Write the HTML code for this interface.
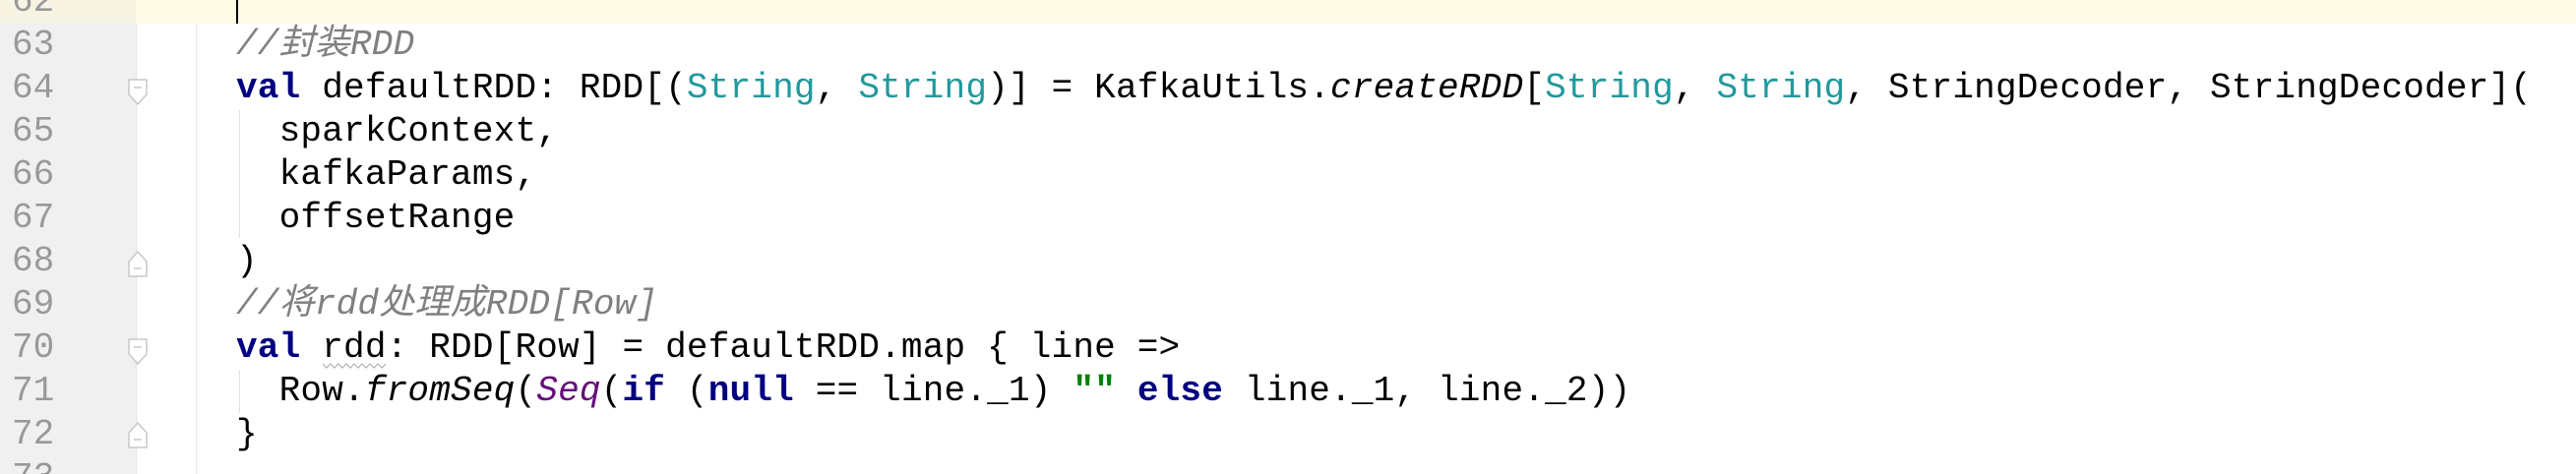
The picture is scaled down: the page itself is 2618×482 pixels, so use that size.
<!DOCTYPE html>
<html><head><meta charset="utf-8"><style>
html,body{margin:0;padding:0;width:2618px;height:482px;overflow:hidden;background:#fff;}
body{position:relative;font-family:"Liberation Mono","Noto Sans CJK SC",monospace;font-size:36px;letter-spacing:0.2px;}
.gut{position:absolute;left:0;top:0;width:138px;height:482px;background:#f0f0f0;}
.fold{position:absolute;left:138px;top:0;width:62px;height:482px;background:#fff;border-left:1px solid #e4e4e4;border-right:1px solid #e8e8e8;box-sizing:border-box;}
.hl{position:absolute;left:0;top:0;width:2618px;height:24px;background:#fefae6;}
.hlg{position:absolute;left:0;top:0;width:138px;height:24px;background:#f7f4e4;}
.ln{position:absolute;left:12px;color:#999;height:44px;line-height:44px;white-space:pre;letter-spacing:0;}
.c{position:absolute;left:240px;height:44px;line-height:44px;white-space:pre;color:#000;}
.k{color:#000080;font-weight:bold}
.t{color:#20999d}
.cm{color:#808080;font-style:italic}
.i{font-style:italic}
.p{color:#660e7a;font-style:italic}
.g{color:#008000;font-weight:bold}
.guide{position:absolute;left:243px;width:1px;background:#e0e0e0;}
.fm{position:absolute;left:130px;}
</style></head><body>
<div class="gut"></div>
<div class="fold"></div>
<div class="hl"></div>
<div class="hlg"></div>
<div style="position:absolute;left:240px;top:0;width:2px;height:24px;background:#000"></div>

<div class="ln" style="top:-20px">62</div>
<div class="ln" style="top:24px">63</div>
<div class="ln" style="top:68px">64</div>
<div class="ln" style="top:112px">65</div>
<div class="ln" style="top:156px">66</div>
<div class="ln" style="top:200px">67</div>
<div class="ln" style="top:244px">68</div>
<div class="ln" style="top:288px">69</div>
<div class="ln" style="top:332px">70</div>
<div class="ln" style="top:376px">71</div>
<div class="ln" style="top:420px">72</div>
<div class="ln" style="top:464px;height:18px;overflow:hidden">73</div>

<svg class="fm" style="top:80px" width="20" height="28"><path d="M1 1H19V16L10 26L1 16Z" fill="#fff" stroke="#c8c8c8" stroke-width="1.5"/><path d="M6 9H14" stroke="#c8c8c8" stroke-width="1.5"/></svg>
<svg class="fm" style="top:254px" width="20" height="28"><path d="M1 27H19V12L10 2L1 12Z" fill="#fff" stroke="#c8c8c8" stroke-width="1.5"/><path d="M6 19H14" stroke="#c8c8c8" stroke-width="1.5"/></svg>
<svg class="fm" style="top:344px" width="20" height="28"><path d="M1 1H19V16L10 26L1 16Z" fill="#fff" stroke="#c8c8c8" stroke-width="1.5"/><path d="M6 9H14" stroke="#c8c8c8" stroke-width="1.5"/></svg>
<svg class="fm" style="top:428px" width="20" height="28"><path d="M1 27H19V12L10 2L1 12Z" fill="#fff" stroke="#c8c8c8" stroke-width="1.5"/><path d="M6 19H14" stroke="#c8c8c8" stroke-width="1.5"/></svg>

<div class="guide" style="top:112px;height:130px"></div>
<div class="guide" style="top:376px;height:44px"></div>

<div class="c cm" style="top:24px">//封装RDD</div>
<div class="c" style="top:68px"><span class="k">val</span> defaultRDD: RDD[(<span class="t">String</span>, <span class="t">String</span>)] = KafkaUtils.<span class="i">createRDD</span>[<span class="t">String</span>, <span class="t">String</span>, StringDecoder, StringDecoder](</div>
<div class="c" style="top:112px">  sparkContext,</div>
<div class="c" style="top:156px">  kafkaParams,</div>
<div class="c" style="top:200px">  offsetRange</div>
<div class="c" style="top:244px">)</div>
<div class="c cm" style="top:288px">//将rdd处理成RDD[Row]</div>
<div class="c" style="top:332px"><span class="k">val</span> rdd: RDD[Row] = defaultRDD.map { line =&gt;</div>
<svg style="position:absolute;left:328px;top:368px" width="64" height="8"><path d="M0 2L4 6L8 2L12 6L16 2L20 6L24 2L28 6L32 2L36 6L40 2L44 6L48 2L52 6L56 2L60 6L64 2" fill="none" stroke="#b0b0b0" stroke-width="1.2"/></svg>
<div class="c" style="top:376px">  Row.<span class="i">fromSeq</span>(<span class="p">Seq</span>(<span class="k">if</span> (<span class="k">null</span> == line._1) <span class="g">""</span> <span class="k">else</span> line._1, line._2))</div>
<div class="c" style="top:420px">}</div>
</body></html>
